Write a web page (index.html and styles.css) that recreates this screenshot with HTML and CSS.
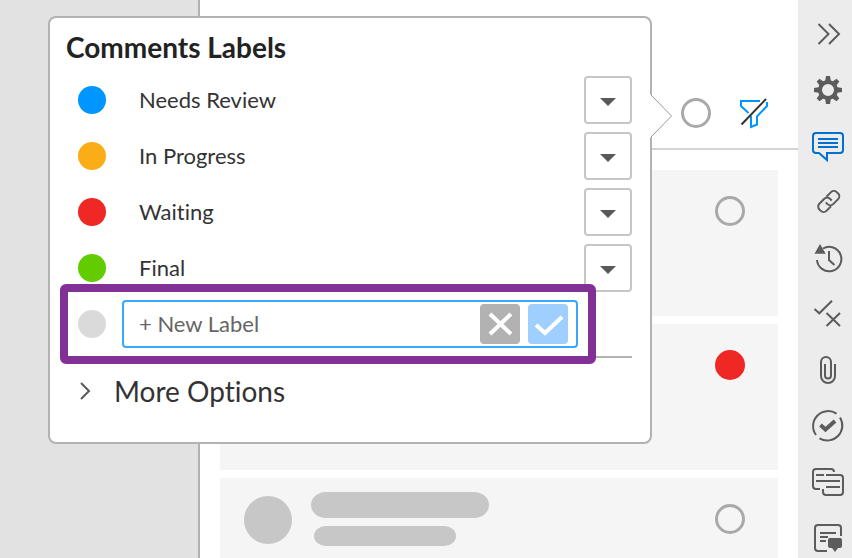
FILE: index.html
```html
<!DOCTYPE html>
<html lang="en">
<head>
    <meta charset="UTF-8">
    <meta name="viewport" content="width=device-width, initial-scale=1.0">
    <title>Comments</title>
    <link rel="stylesheet" href="styles.css">
</head>
<body>
    <div class="app">
        <div class="gutter"></div>

        <main class="panel">
            <header class="panel-header">
                <button type="button" class="ring" aria-label="Filter by label"></button>
                <button type="button" class="filter" aria-label="Clear filter">
                    <svg width="32" height="32" viewBox="0 0 32 32">
                        <path class="funnel" d="M22 4H3V9L10.5 16M13 19V30L19 27.5V19.5L29 9V5"/>
                        <path class="slash" d="M3.5 27.5L28 2"/>
                    </svg>
                </button>
            </header>

            <div class="cards">
                <article class="card">
                    <button type="button" class="ring" aria-label="Set label"></button>
                </article>
                <article class="card">
                    <button type="button" class="ring waiting" aria-label="Waiting"></button>
                </article>
                <article class="card">
                    <div class="avatar"></div>
                    <div class="lines">
                        <div class="pill"></div>
                        <div class="pill short"></div>
                    </div>
                    <button type="button" class="ring" aria-label="Set label"></button>
                </article>
            </div>

            <section class="popover">
                <svg class="pointer" width="24" height="44" viewBox="0 0 24 44">
                    <path d="M0 1L1 1L21.5 22L1 43H0Z" class="pointer-fill"/>
                    <path d="M1 1L21.5 22L1 43" class="pointer-line"/>
                </svg>
                <h2>Comments Labels</h2>
                <ul class="labels">
                    <li>
                        <span class="dot blue"></span>
                        <span class="name">Needs Review</span>
                        <button type="button" class="drop" aria-label="Needs Review options"><svg width="16" height="8"><path d="M0 0H16L8 8Z"/></svg></button>
                    </li>
                    <li>
                        <span class="dot orange"></span>
                        <span class="name">In Progress</span>
                        <button type="button" class="drop" aria-label="In Progress options"><svg width="16" height="8"><path d="M0 0H16L8 8Z"/></svg></button>
                    </li>
                    <li>
                        <span class="dot red"></span>
                        <span class="name">Waiting</span>
                        <button type="button" class="drop" aria-label="Waiting options"><svg width="16" height="8"><path d="M0 0H16L8 8Z"/></svg></button>
                    </li>
                    <li>
                        <span class="dot green"></span>
                        <span class="name">Final</span>
                        <button type="button" class="drop" aria-label="Final options"><svg width="16" height="8"><path d="M0 0H16L8 8Z"/></svg></button>
                    </li>
                </ul>
                <form class="new-label">
                    <span class="dot empty"></span>
                    <div class="field">
                        <input type="text" placeholder="+ New Label" aria-label="New label">
                        <button type="button" class="cancel" aria-label="Cancel">
                            <svg width="40" height="40"><path d="M10 10L31 30M31 10L10 30"/></svg>
                        </button>
                        <button type="submit" class="save" aria-label="Save">
                            <svg width="40" height="40"><path d="M8 21L17 29L34 13"/></svg>
                        </button>
                    </div>
                </form>
                <button type="button" class="more">
                    <svg width="12" height="18"><path d="M1 1L9 9L1 17"/></svg>
                    More Options
                </button>
            </section>
        </main>

        <nav class="toolbar">
            <button type="button" aria-label="Collapse">
                <svg viewBox="0 0 36 36"><path d="M8.5 8L18.5 18L8.5 28M19 8L29 18L19 28"/></svg>
            </button>
            <button type="button" aria-label="Settings">
                <svg viewBox="0 0 36 36">
                    <circle cx="18" cy="18" r="8" stroke-width="4"/>
                    <g class="solid">
                        <path id="tooth" d="M15 10L16 4H20L21 10Z"/>
                        <use href="#tooth" transform="rotate(45 18 18)"/>
                        <use href="#tooth" transform="rotate(90 18 18)"/>
                        <use href="#tooth" transform="rotate(135 18 18)"/>
                        <use href="#tooth" transform="rotate(180 18 18)"/>
                        <use href="#tooth" transform="rotate(225 18 18)"/>
                        <use href="#tooth" transform="rotate(270 18 18)"/>
                        <use href="#tooth" transform="rotate(315 18 18)"/>
                    </g>
                </svg>
            </button>
            <button type="button" class="active" aria-label="Comments">
                <svg viewBox="0 0 36 36"><path d="M17 25H30Q33 25 33 22V8Q33 5 30 5H6Q3 5 3 8V22Q3 25 6 25H9L17 32V24M8 11H28M8 15H28M8 19H28"/></svg>
            </button>
            <button type="button" aria-label="Links">
                <svg viewBox="0 0 36 36">
                    <g transform="rotate(-45 18.7 17.5)">
                        <path d="M17 22.5H10.500A4 4 0 0 1 6.5 18.5V16.500A4 4 0 0 1 10.500 12.500H17.500A4 4 0 0 1 21.500 16.500V19"/>
                        <path d="M20.5 12.500H27A4 4 0 0 1 31 16.500V18.500A4 4 0 0 1 27 22.500H20A4 4 0 0 1 16 18.500V16"/>
                    </g>
                </svg>
            </button>
            <button type="button" aria-label="History">
                <svg viewBox="0 0 36 36">
                    <path d="M7 20A12.2 12.2 0 1 0 13 8.5M19 11V20L24.5 25"/>
                    <path class="solid" d="M10 4L15.7 13.7H4.5Z"/>
                </svg>
            </button>
            <button type="button" aria-label="Review">
                <svg viewBox="0 0 36 36"><path d="M4.5 13L9.3 17.3L22 4.7M16.5 17L30 30M30 17L16.5 30"/></svg>
            </button>
            <button type="button" aria-label="Attachments">
                <svg viewBox="0 0 36 36"><path d="M25 12V24A7 7 0 0 1 11 24V10A5 5 0 0 1 21 10V23.5A3 3 0 0 1 15 23.5V12"/></svg>
            </button>
            <button type="button" aria-label="Tasks">
                <svg viewBox="0 0 36 36">
                    <path d="M26.5 5.7A15 15 0 0 0 6 27M9.5 30.3A15 15 0 0 0 30 9.5"/>
                    <path stroke-width="4" d="M10.500 17L15.5 21.500L25 13"/>
                </svg>
            </button>
            <button type="button" aria-label="Threads">
                <svg viewBox="0 0 36 36"><path d="M24 8Q24 5 21 5H6Q3 5 3 8V22Q3 25 6 25H10M16 11H30Q33 11 33 14V28Q33 31 30 31H16Q13 31 13 28V25M6 11H14M6 17H30M16 23H30"/></svg>
            </button>
            <button type="button" aria-label="Notes">
                <svg viewBox="0 0 36 36">
                    <path d="M31 16V8Q31 5 28 5H8Q5 5 5 8V28Q5 31 8 31H17M10 13H26M10 17H18M10 21H16"/>
                    <path class="solid" d="M20 18H30Q32 18 32 20V26Q32 28 30 28H28L25 32L22 28H20Q18 28 18 26V20Q18 18 20 18Z"/>
                </svg>
            </button>
        </nav>
    </div>
</body>
</html>
```

FILE: styles.css
```css
* {
    box-sizing: border-box;
}
body {
    margin: 0;
    font-family: Lato, sans-serif;
    font-variant-ligatures: no-common-ligatures;
    color: #333;
    background-color: #e2e2e2;
}
button {
    padding: 0;
    border: none;
    background: none;
    font-family: inherit;
    font-variant-ligatures: inherit;
    color: inherit;
    cursor: pointer;
}
svg {
    display: block;
    fill: none;
}
.app {
    display: flex;
    height: 100vh;
    overflow: hidden;
}
.gutter {
    flex: 0 0 198px;
}
.panel {
    position: relative;
    flex: 1;
    border-left: 2px solid #b2b2b2;
    background-color: white;
}
.panel-header {
    display: flex;
    justify-content: flex-end;
    align-items: center;
    gap: 27px;
    padding: 78px 28px 0 0;
    height: 150px;
    border-bottom: 2px solid #d4d4d4;
}
.ring {
    width: 30px;
    height: 30px;
    border: 3px solid #a9a9a9;
    border-radius: 50%;
}
.ring.waiting {
    border-color: #ef2826;
    background-color: #ef2826;
}
.funnel {
    stroke: #0096ff;
    stroke-width: 2;
}
.slash {
    stroke: #333;
    stroke-width: 2;
}

/* comment cards */
.cards {
    display: flex;
    flex-direction: column;
    gap: 8px;
    padding: 20px;
}
.card {
    display: flex;
    align-items: flex-start;
    height: 146px;
    padding: 14px 33px 0 24px;
    background-color: #f5f5f5;
}
.card .ring {
    margin: 12px 0 0 auto;
}
.avatar {
    width: 48px;
    height: 48px;
    margin-top: 4px;
    border-radius: 50%;
    background-color: #c7c7c7;
}
.lines {
    margin-left: 19px;
}
.pill {
    width: 178px;
    height: 26px;
    border-radius: 15px / 13px;
    background-color: #c7c7c7;
}
.pill.short {
    width: 142px;
    height: 20px;
    margin: 8px 0 0 3px;
}

/* labels popover */
.popover {
    position: absolute;
    top: 16px;
    right: 146px;
    width: 604px;
    padding: 11px 18px 33px 16px;
    border: 2px solid #b2b2b2;
    border-radius: 8px;
    background-color: white;
}
.pointer {
    position: absolute;
    top: 76px;
    left: 100%;
}
.pointer-fill {
    fill: white;
    stroke: white;
}
.pointer-line {
    stroke: #999;
}
h2 {
    margin: 0 0 11px;
    font-size: 28px;
    line-height: 36px;
    color: #222;
}
.labels {
    display: flex;
    flex-direction: column;
    gap: 8px;
    margin: 0 0 8px;
    padding: 0;
    list-style: none;
}
.labels li {
    display: flex;
    align-items: center;
    height: 48px;
    padding-left: 12px;
}
.dot {
    flex: none;
    width: 28px;
    height: 28px;
    border-radius: 50%;
}
.blue { background-color: #0096ff; }
.orange { background-color: #fbad18; }
.red { background-color: #ef2826; }
.green { background-color: #62cc00; }
.empty { background-color: #dadada; }
.name {
    flex: 1;
    padding: 0 0 2px 33px;
    font-size: 22px;
}
.drop {
    display: flex;
    justify-content: center;
    align-items: center;
    width: 48px;
    height: 48px;
    padding-top: 4px;
    border: 2px solid #c6c6c6;
    border-radius: 4px;
}
.drop svg {
    fill: #595959;
}
.new-label {
    position: relative;
    display: flex;
    align-items: center;
    gap: 16px;
    padding: 0 54px 8px 12px;
    border-bottom: 2px solid #b2b2b2;
}
/* highlight frame round the new label row */
.new-label::after {
    content: "";
    position: absolute;
    top: -16px;
    right: 36px;
    bottom: -8px;
    left: -6px;
    border: 8px solid #822f96;
    border-radius: 6px;
    pointer-events: none;
}
.field {
    display: flex;
    flex: 1;
    align-items: center;
    gap: 8px;
    height: 48px;
    padding: 0 8px 0 15px;
    border: 2px solid #38a8fd;
    border-radius: 4px;
}
.field input {
    flex: 1;
    min-width: 0;
    padding: 0 0 2px;
    border: none;
    outline: none;
    background: none;
    font-family: inherit;
    font-size: 22px;
}
.field input::placeholder {
    color: #666;
}
.field button {
    border-radius: 4px;
    stroke: white;
    stroke-width: 4;
}
.cancel {
    background-color: #b2b2b2;
}
.save {
    background-color: #9fcfff;
}
.more {
    display: flex;
    align-items: center;
    gap: 22px;
    margin-top: 15px;
    padding-left: 14px;
    font-size: 28px;
    line-height: 36px;
}
.more svg {
    stroke: #595959;
    stroke-width: 2;
}

/* right toolbar */
.toolbar {
    display: flex;
    flex: 0 0 54px;
    flex-direction: column;
    padding-top: 6px;
    background-color: #ececec;
}
.toolbar button {
    flex: 0 0 56px;
    padding-left: 12px;
    stroke: #5c5c5c;
    stroke-width: 2;
}
.toolbar svg {
    width: 36px;
    height: 36px;
}
.toolbar .active {
    stroke: #0070d2;
}
.toolbar .solid {
    fill: #5c5c5c;
    stroke: none;
}
```
